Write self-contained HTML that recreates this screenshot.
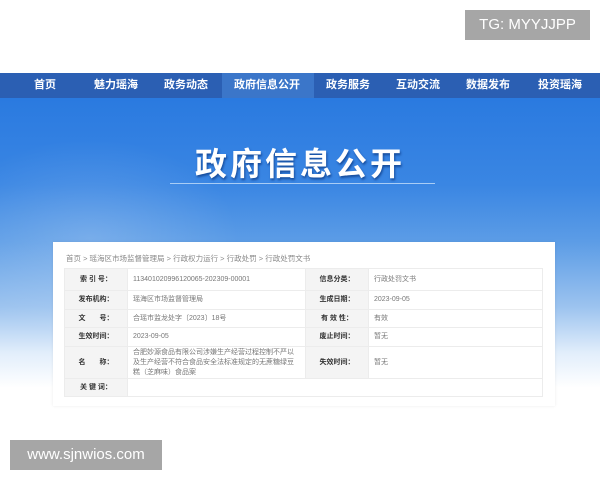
<!DOCTYPE html>
<html><head><meta charset="utf-8"><style>
*{margin:0;padding:0;box-sizing:border-box}
body{width:600px;height:480px;overflow:hidden;background:#fff;position:relative;font-family:"Liberation Sans","Noto Sans CJK SC",sans-serif}
.nav{position:absolute;left:0;top:73px;width:600px;height:25px;background:#2b5fb3}
.nav span{position:absolute;top:0;height:25px;line-height:25px;color:#fff;font-size:11px;font-weight:bold;transform:translateX(-50%);white-space:nowrap}
.act{position:absolute;left:222px;top:73px;width:92px;height:25px;background:#3b76c9}
.banner{position:absolute;left:0;top:98px;width:600px;height:290px;background:linear-gradient(180deg,#2a7ae0 0%,#3a86e3 30%,#5d9de6 50%,#9cc3ef 72%,#e2eefb 88%,#fff 100%)}
.banner:before{content:"";position:absolute;left:-60px;top:40px;width:300px;height:200px;background:radial-gradient(ellipse,rgba(255,255,255,.18),rgba(255,255,255,0) 70%)}
.title{position:absolute;left:0;width:600px;top:139px;text-align:center;color:#fff;font-size:32px;font-weight:bold;letter-spacing:3px;text-shadow:1px 2px 2px rgba(0,40,110,.6);font-family:"Noto Sans CJK SC",sans-serif}
.line{position:absolute;left:170px;top:183px;width:265px;height:1px;background:#a9cdf5}
.card{position:absolute;left:53px;top:242px;width:502px;height:164px;background:#fff;box-shadow:0 0 3px rgba(0,0,0,.08)}
.crumb{position:absolute;left:13px;top:11px;font-size:7.5px;color:#888}
table{position:absolute;left:11px;top:26px;width:479px;border-collapse:collapse;font-size:7px}
td{border:1px solid #ececec;color:#777;padding:0 5px;line-height:10px}
td.l{background:#f4f4f4;color:#333;font-weight:bold;text-align:center;width:63px}
.wm{position:absolute;background:#a6a6a6;color:#fff;font-size:15px;line-height:30px;text-align:center}
</style></head><body>
<div class="banner"></div>
<div class="nav"></div>
<div class="act"></div>
<div class="nav" style="background:none">
<span style="left:45px">首页</span><span style="left:116px">魅力瑶海</span><span style="left:186px">政务动态</span><span style="left:267px">政府信息公开</span><span style="left:348px">政务服务</span><span style="left:418px">互动交流</span><span style="left:488px">数据发布</span><span style="left:560px">投资瑶海</span>
</div>
<div class="title">政府信息公开</div>
<div class="line"></div>
<div class="card">
<div class="crumb">首页 &gt; 瑶海区市场监督管理局 &gt; 行政权力运行 &gt; 行政处罚 &gt; 行政处罚文书</div>
<table>
<tr style="height:22px"><td class="l">索 引 号：</td><td style="width:178px">113401020996120065-202309-00001</td><td class="l">信息分类：</td><td>行政处罚文书</td></tr>
<tr style="height:19px"><td class="l">发布机构：</td><td>瑶海区市场监督管理局</td><td class="l">生成日期：</td><td>2023-09-05</td></tr>
<tr style="height:18px"><td class="l">文　　号：</td><td>合瑶市监龙处字〔2023〕18号</td><td class="l">有 效 性：</td><td>有效</td></tr>
<tr style="height:19px"><td class="l">生效时间：</td><td>2023-09-05</td><td class="l">废止时间：</td><td>暂无</td></tr>
<tr style="height:32px"><td class="l">名　　称：</td><td>合肥妙源食品有限公司涉嫌生产经营过程控制不严以及生产经营不符合食品安全法标准规定的无蔗糖绿豆糕（芝麻味）食品案</td><td class="l">失效时间：</td><td>暂无</td></tr>
<tr style="height:18px"><td class="l">关 键 词：</td><td colspan="3"></td></tr>
</table>
</div>
<div class="wm" style="left:465px;top:10px;width:125px">TG: MYYJJPP</div>
<div class="wm" style="left:10px;top:440px;width:152px">www.sjnwios.com</div>
</body></html>
